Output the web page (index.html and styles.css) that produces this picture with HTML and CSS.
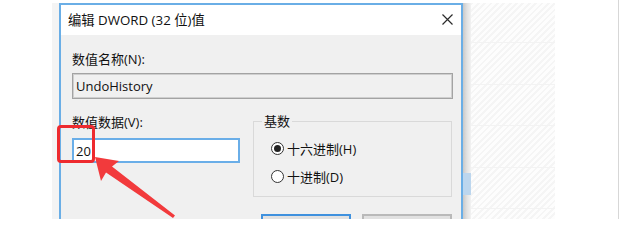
FILE: index.html
```html
<!DOCTYPE html>
<html lang="zh-CN">
<head>
<meta charset="utf-8">
<title>编辑 DWORD (32 位)值</title>
<link rel="stylesheet" href="styles.css">
</head>
<body>
<div class="stage">
  <div class="gutter"></div>
  <div class="shadow-left"></div>
  <div class="dialog">
    <div class="titlebar">
      <span class="title">编辑 DWORD (32 位)值</span>
      <svg class="close" width="11" height="11" viewBox="0 0 11 11" aria-hidden="true">
        <path d="M0.5 0.5 L10.5 10.5 M10.5 0.5 L0.5 10.5" stroke="#2b2b2b" stroke-width="1.2" fill="none"/>
      </svg>
    </div>
    <div class="body">
      <div class="label">数值名称(N):</div>
      <div class="field field-readonly">UndoHistory</div>
      <div class="row">
        <div class="col-data">
          <div class="label">数值数据(V):</div>
          <div class="field field-active">20</div>
        </div>
        <fieldset class="group">
          <legend class="legend">基数</legend>
          <div class="radio-row"><span class="radio checked"></span><span>十六进制(H)</span></div>
          <div class="radio-row"><span class="radio"></span><span>十进制(D)</span></div>
        </fieldset>
      </div>
      <div class="buttons">
        <div class="btn btn-default">确定</div>
        <div class="btn">取消</div>
      </div>
    </div>
  </div>
  <div class="shadow-right"><div class="peek"></div></div>
  <div class="hatch"></div>
  <div class="spacer"></div>
  <div class="edge-line"></div>
  <div class="edge-pad"></div>

  <svg class="annot" width="620" height="219" viewBox="0 0 620 219" aria-hidden="true">
    <rect x="58.5" y="126.5" width="35" height="35" rx="2.5" fill="none" stroke="#ee2a2e" stroke-width="3"/>
    <polygon points="95,157 119,161 112,166.5 175,215.5 173,218 106,172.5 101,181" fill="#f23a3c"/>
  </svg>
</div>
</body>
</html>
```

FILE: styles.css
```css
* { box-sizing: border-box; }

html, body {
  margin: 0;
  padding: 0;
  background: #ffffff;
}

body {
  font-family: "Open Sans", "Noto Sans CJK SC", sans-serif;
  font-size: 13px;
  color: #111111;
}

.stage {
  position: relative;
  width: 620px;
  height: 219px;
  overflow: hidden;
  display: flex;
  align-items: flex-start;
  background: #ffffff;
}

.gutter {
  width: 52px;
  flex: none;
}

.shadow-left {
  width: 7px;
  flex: none;
  height: 216px;
  margin-top: 3px;
  background: #f4f4f4;
}

.dialog {
  width: 404px;
  flex: none;
  margin-top: 3px;
  border: 2px solid #6aaee6;
  border-bottom: none;
  background: #f0f0f0;
}

.titlebar {
  height: 30px;
  background: #ffffff;
  display: flex;
  align-items: center;
  justify-content: space-between;
  padding: 0 8px 1px 7px;
}

.title {
  font-size: 13.3px;
  line-height: 18px;
  color: #111111;
}

.close {
  display: block;
}

.body {
  padding: 15px 8px 0 11px;
}

.label {
  line-height: 18px;
  height: 18px;
  white-space: nowrap;
}

.field {
  margin-top: 5px;
  display: flex;
  align-items: center;
  padding-left: 3px;
  font-size: 13px;
  white-space: nowrap;
}

.field-readonly {
  height: 26px;
  background: #f0f0f0;
  border: 1px solid #a3a3a3;
  box-shadow: inset 0 0 0 1px #cfcfcf;
}

.field-active {
  margin-top: 7px;
  height: 25px;
  background: #ffffff;
  border: 2px solid #6aaee8;
  padding-left: 2px;
}

.row {
  display: flex;
  align-items: flex-start;
  margin-top: 14px;
}

.col-data {
  width: 168px;
  flex: none;
}

.group {
  width: 199px;
  flex: none;
  margin: 0 0 0 13px;
  padding: 5px 0 6px 0;
  border: 1px solid #d9d9d9;
  min-width: 0;
}

.legend {
  margin-left: 8px;
  padding: 0 2px;
  line-height: 16px;
  font-size: 13px;
}

.radio-row {
  height: 28px;
  display: flex;
  align-items: center;
  gap: 3px;
  padding-left: 17px;
  white-space: nowrap;
}

.radio {
  width: 13px;
  height: 13px;
  flex: none;
  border: 1px solid #333333;
  border-radius: 50%;
  background: #ffffff;
  display: flex;
  align-items: center;
  justify-content: center;
}

.radio.checked::after {
  content: "";
  width: 7px;
  height: 7px;
  border-radius: 50%;
  background: #222222;
}

.buttons {
  display: flex;
  justify-content: flex-end;
  gap: 11px;
  margin-top: 17px;
  padding-right: 1px;
}

.btn {
  width: 90px;
  height: 24px;
  display: flex;
  align-items: center;
  justify-content: center;
  background: #e1e1e1;
  border: 2px solid #b9b9b9;
}

.btn-default {
  border-color: #3f91de;
}

.shadow-right {
  width: 8px;
  flex: none;
  height: 216px;
  margin-top: 3px;
  background: linear-gradient(to right, #c9c9c9, #e2e2e2 50%, #f2f2f2);
  padding-top: 170px;
}

.peek {
  height: 22px;
  background: #bcd6ee;
}

.hatch {
  width: 84px;
  flex: none;
  height: 216px;
  margin-top: 3px;
  background:
    repeating-linear-gradient(to bottom, transparent 0 39px, #f3f3f3 39px 40px, transparent 40px 41.5px),
    repeating-linear-gradient(135deg, #f5f5f5 0 2px, #fdfdfd 2px 4.5px);
}

.spacer {
  flex: 1;
}

.edge-line {
  width: 1px;
  flex: none;
  height: 219px;
  background: #d7d7d7;
}

.edge-pad {
  width: 1px;
  flex: none;
}

.annot {
  position: absolute;
  left: 0;
  top: 0;
  pointer-events: none;
}
```
